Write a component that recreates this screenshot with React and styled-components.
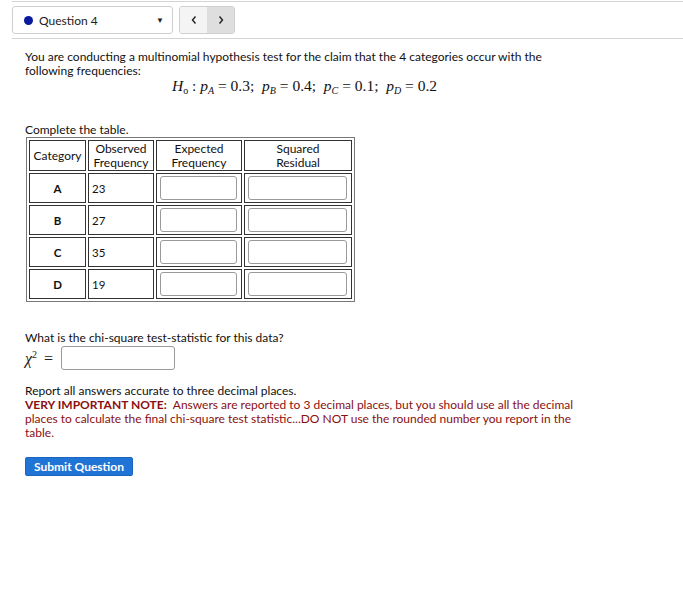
import styled, { createGlobalStyle } from "styled-components";

const GlobalStyle = createGlobalStyle`
  body {
    margin: 0;
    background: #fff;
    font-family: Lato, "Liberation Sans", sans-serif;
    font-size: 12px;
    color: #111;
  }
`;

const rows = [
  { cat: "A", obs: 23 },
  { cat: "B", obs: 27 },
  { cat: "C", obs: 35 },
  { cat: "D", obs: 19 },
];

const App = () => {
  return (
    <>
      <GlobalStyle />
      <Page>
        <TopBar>
          <QuestionSelect>
            <Dot />
            <SelectLabel>Question 4</SelectLabel>
            <Caret>▼</Caret>
          </QuestionSelect>
          <NavGroup>
            <NavButton>
              <svg width="8" height="10" viewBox="0 0 8 10">
                <path d="M5.5 1.5 L2.5 5 L5.5 8.5" fill="none" stroke="#222" strokeWidth="1.4" />
              </svg>
            </NavButton>
            <NavButton $dark>
              <svg width="8" height="10" viewBox="0 0 8 10">
                <path d="M2.5 1.5 L5.5 5 L2.5 8.5" fill="none" stroke="#222" strokeWidth="1.4" />
              </svg>
            </NavButton>
          </NavGroup>
        </TopBar>

        <Body>
          <Para>
            You are conducting a multinomial hypothesis test for the claim that the 4 categories occur with the
            following frequencies:
          </Para>
          <Formula>
            <i>H</i><sub>o</sub> : <i>p</i><sub><i>A</i></sub> = 0.3;&nbsp; <i>p</i><sub><i>B</i></sub> = 0.4;&nbsp;{" "}
            <i>p</i><sub><i>C</i></sub> = 0.1;&nbsp; <i>p</i><sub><i>D</i></sub> = 0.2
          </Formula>

          <TableCaption>Complete the table.</TableCaption>
          <DataTable>
            <thead>
              <tr>
                <HeadCell $w={53}>Category</HeadCell>
                <HeadCell $w={62}>
                  Observed
                  <br />
                  Frequency
                </HeadCell>
                <HeadCell $w={82}>
                  Expected
                  <br />
                  Frequency
                </HeadCell>
                <HeadCell $w={104}>
                  Squared
                  <br />
                  Residual
                </HeadCell>
              </tr>
            </thead>
            <tbody>
              {rows.map((r) => (
                <tr key={r.cat}>
                  <CatCell>{r.cat}</CatCell>
                  <ObsCell>{r.obs}</ObsCell>
                  <InputCell>
                    <AnswerBox $w={77} />
                  </InputCell>
                  <InputCell>
                    <AnswerBox $w={99} />
                  </InputCell>
                </tr>
              ))}
            </tbody>
          </DataTable>

          <Question>What is the chi-square test-statistic for this data?</Question>
          <ChiRow>
            <ChiLabel>
              <i>χ</i>
              <sup>2</sup> =
            </ChiLabel>
            <AnswerBox $w={114} />
          </ChiRow>

          <Report>Report all answers accurate to three decimal places.</Report>
          <Note>
            <NoteLead>VERY IMPORTANT NOTE:</NoteLead>Answers are reported to 3 decimal places, but you should use all
            the decimal places to calculate the final chi-square test statistic...DO NOT use the rounded number you
            report in the table.
          </Note>

          <SubmitButton>Submit Question</SubmitButton>
        </Body>
      </Page>
    </>
  );
};

export default App;

const Page = styled.div`
  width: 683px;
  min-height: 598px;
`;

const TopBar = styled.div`
  margin-left: 12px;
  border-top: 1px solid #d4d4d4;
  border-bottom: 1px solid #d4d4d4;
  margin-top: 1px;
  height: 38px;
  display: flex;
  align-items: center;
  gap: 6px;
  box-sizing: border-box;
`;

const QuestionSelect = styled.div`
  width: 161px;
  height: 28px;
  box-sizing: border-box;
  border: 1px solid #cfcfcf;
  border-radius: 3px;
  display: flex;
  align-items: center;
  padding: 0 8px 0 11px;
`;

const Dot = styled.span`
  width: 9px;
  height: 9px;
  border-radius: 50%;
  background: #0a1a9c;
  margin-right: 6px;
`;

const SelectLabel = styled.span`
  flex: 1;
  font-size: 12px;
  color: #222;
`;

const Caret = styled.span`
  font-size: 8px;
  color: #222;
`;

const NavGroup = styled.div`
  display: flex;
  border: 1px solid #cfcfcf;
  border-radius: 3px;
  overflow: hidden;
  height: 28px;
  box-sizing: border-box;
`;

const NavButton = styled.div`
  width: 27px;
  display: flex;
  align-items: center;
  justify-content: center;
  background: ${(p) => (p.$dark ? "#dedede" : "#f4f4f4")};
`;

const Body = styled.div`
  padding: 11px 25px 0;
`;

const Para = styled.p`
  margin: 0;
  line-height: 14px;
  width: 545px;
`;

const Formula = styled.div`
  font-family: "Liberation Serif", serif;
  font-size: 15.5px;
  margin: -1px 0 0 147px;
  line-height: 18px;

  sub {
    font-size: 10px;
    vertical-align: -3px;
  }
`;

const TableCaption = styled.div`
  margin-top: 23px;
  line-height: 14px;
`;

const DataTable = styled.table`
  border: 1px solid #777;
  border-spacing: 2px;
  margin-left: 1px;
  table-layout: fixed;
`;

const HeadCell = styled.th`
  width: ${(p) => p.$w}px;
  border: 1px solid #333;
  font-weight: normal;
  font-size: 12px;
  line-height: 14px;
  height: 29px;
  padding: 0 1px;
`;

const CatCell = styled.td`
  border: 1px solid #333;
  text-align: center;
  font-weight: bold;
  font-size: 11.5px;
  height: 28px;
  padding: 0;
`;

const ObsCell = styled.td`
  border: 1px solid #333;
  padding: 0 0 0 3px;
  font-size: 11.5px;
`;

const InputCell = styled.td`
  border: 1px solid #333;
  padding: 0 3px;
`;

const AnswerBox = styled.div`
  width: ${(p) => p.$w}px;
  height: 24px;
  box-sizing: border-box;
  border: 1px solid #9a9a9a;
  border-radius: 3px;
  background: #fff;
`;

const Question = styled.div`
  margin-top: 29px;
  line-height: 14px;
`;

const ChiRow = styled.div`
  display: flex;
  align-items: center;
  gap: 8px;
  margin-top: 1px;
`;

const ChiLabel = styled.span`
  font-family: "Liberation Serif", serif;
  font-size: 16px;
  color: #222;

  sup {
    font-size: 10px;
    vertical-align: 6px;
    margin-right: 3px;
  }
`;

const Report = styled.div`
  margin-top: 14px;
  line-height: 14px;
`;

const Note = styled.div`
  color: #8a1010;
  line-height: 14px;
  width: 550px;
`;

const NoteLead = styled.strong`
  font-weight: bold;
  margin-right: 6px;
`;

const SubmitButton = styled.button`
  margin-top: 17px;
  background: #1f74d6;
  color: #fff;
  border: 1px solid #1a66c0;
  border-radius: 2px;
  font-family: Lato, "Liberation Sans", sans-serif;
  font-weight: bold;
  font-size: 12px;
  height: 19px;
  padding: 0 8px;
  line-height: 16px;
`;
